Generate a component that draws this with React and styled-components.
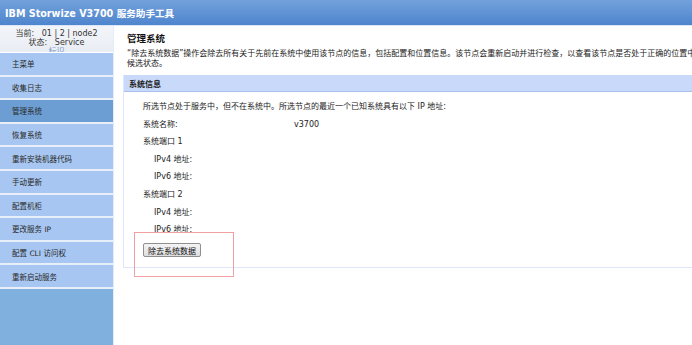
import React from 'react';
import styled, { createGlobalStyle } from "styled-components";

const GlobalStyle = createGlobalStyle`
    html, body {
        margin: 0;
        padding: 0;
        background: #fff;
        overflow: hidden;
    }
    body {
        font-family: "DejaVu Sans", "Noto Sans CJK SC", sans-serif;
        color: #222;
    }
`

const menu = [
    '主菜单',
    '收集日志',
    '管理系统',
    '恢复系统',
    '重新安装机器代码',
    '手动更新',
    '配置机柜',
    '更改服务 IP',
    '配置 CLI 访问权',
    '重新启动服务',
];

const ports = [1, 2];

function App() {
  return (
    <Page>
        <GlobalStyle />
        <Header>IBM Storwize V3700 服务助手工具</Header>
        <Body>
            <Sidebar>
                <Info>
                    <InfoLine>当前:&nbsp;&nbsp; 01 | 2 | node2</InfoLine>
                    <InfoLine>状态:&nbsp;&nbsp; Service</InfoLine>
                    <InfoLine $muted>标识</InfoLine>
                </Info>
                <Menu>
                    {menu.map((item) => (
                        <MenuItem key={item} $active={item === '管理系统'}>{item}</MenuItem>
                    ))}
                </Menu>
            </Sidebar>
            <Main>
                <Title>管理系统</Title>
                <Desc>
                    <span>“除去系统数据”操作会除去所有关于先前在系统中使用该节点的信息，包括配置和位置信息。该节点会重新启动并进行检查，以查看该节点是否处于正确的位置中。除去数据后，该节点将显示为</span>
                    <span>候选状态。</span>
                </Desc>
                <Panel>
                    <PanelHeader>系统信息</PanelHeader>
                    <PanelBody>
                        <Row>所选节点处于服务中，但不在系统中。所选节点的最近一个已知系统具有以下 IP 地址:</Row>
                        <Row>
                            <Label>系统名称:</Label>
                            <span>v3700</span>
                        </Row>
                        {ports.map((p) => (
                            <React.Fragment key={p}>
                                <Row>系统端口 {p}</Row>
                                <Row $indent>IPv4 地址:</Row>
                                <Row $indent>IPv6 地址:</Row>
                            </React.Fragment>
                        ))}
                        <Button type="button">除去系统数据</Button>
                    </PanelBody>
                    <Marker />
                </Panel>
            </Main>
        </Body>
    </Page>
  );
}

const Page = styled.div`
    display: flex;
    flex-direction: column;
    height: 100vh;
`
const Header = styled.div`
    height: 25px;
    flex: none;
    display: flex;
    align-items: center;
    padding-left: 5px;
    background: linear-gradient(#72a1db, #4f85ce);
    border-bottom: 1px solid #dce6f4;
    color: #fff;
    font-weight: bold;
    font-size: 9.6px;
    white-space: nowrap;
`
const Body = styled.div`
    flex: 1;
    display: flex;
    min-height: 0;
`
const Sidebar = styled.div`
    width: 113px;
    flex: none;
    display: flex;
    flex-direction: column;
    background: #80b0dd;
    border-right: 1px solid #e4ecf7;
`
const Info = styled.div`
    height: 27px;
    padding-top: 2.5px;
    box-sizing: border-box;
    overflow: hidden;
    text-align: center;
    background: linear-gradient(#f3f5f9, #e9edf4);
    border-bottom: 1px solid #fff;
`
const InfoLine = styled.div`
    font-size: 8px;
    line-height: 9px;
    color: ${(p) => (p.$muted ? '#7d9bc7' : '#333')};
`
const Menu = styled.div`
    display: flex;
    flex-direction: column;
`
const MenuItem = styled.div`
    height: 21.6px;
    display: flex;
    align-items: center;
    padding-left: 12px;
    font-size: 7.5px;
    color: #2a2a2a;
    background: ${(p) => (p.$active ? '#6c9dd3' : '#a7c6f1')};
    border-bottom: 2px solid #e8eff9;
    white-space: nowrap;
`
const Main = styled.div`
    flex: 1;
    min-width: 0;
    padding: 7px 0 0 9px;
    overflow: hidden;
`
const Title = styled.h2`
    margin: 0 0 3.5px 4px;
    font-size: 9.5px;
    line-height: 12px;
    font-weight: bold;
    color: #111;
`
const Desc = styled.p`
    margin: 0 0 6.5px 4px;
    font-size: 8px;
    line-height: 10px;
    white-space: nowrap;
    span {
        display: block;
    }
`
const Panel = styled.div`
    position: relative;
    width: 900px;
    border: 1px solid #dfe7fb;
    border-top: none;
`
const PanelHeader = styled.div`
    height: 16px;
    display: flex;
    align-items: center;
    padding-left: 5px;
    background: #c8d9fa;
    border-bottom: 1px solid #a9c1ee;
    font-size: 8px;
    font-weight: bold;
    color: #222;
`
const PanelBody = styled.div`
    padding: 6px 0 9px 19px;
`
const Row = styled.div`
    display: flex;
    font-size: 8px;
    line-height: 17.6px;
    padding-left: ${(p) => (p.$indent ? '11px' : '0')};
    white-space: nowrap;
`
const Label = styled.span`
    width: 151px;
`
const Button = styled.button`
    margin-top: 4px;
    height: 14px;
    padding: 0 4px;
    font-family: inherit;
    font-size: 8px;
    color: #111;
    background: linear-gradient(#f4f4f4, #dedede);
    border: 1px solid #8f8f8f;
    border-radius: 2px;
`
const Marker = styled.div`
    position: absolute;
    left: 10px;
    top: 157px;
    width: 100px;
    height: 45px;
    border: 1px solid #f0a0a0;
    box-sizing: border-box;
    pointer-events: none;
`

export default App;
